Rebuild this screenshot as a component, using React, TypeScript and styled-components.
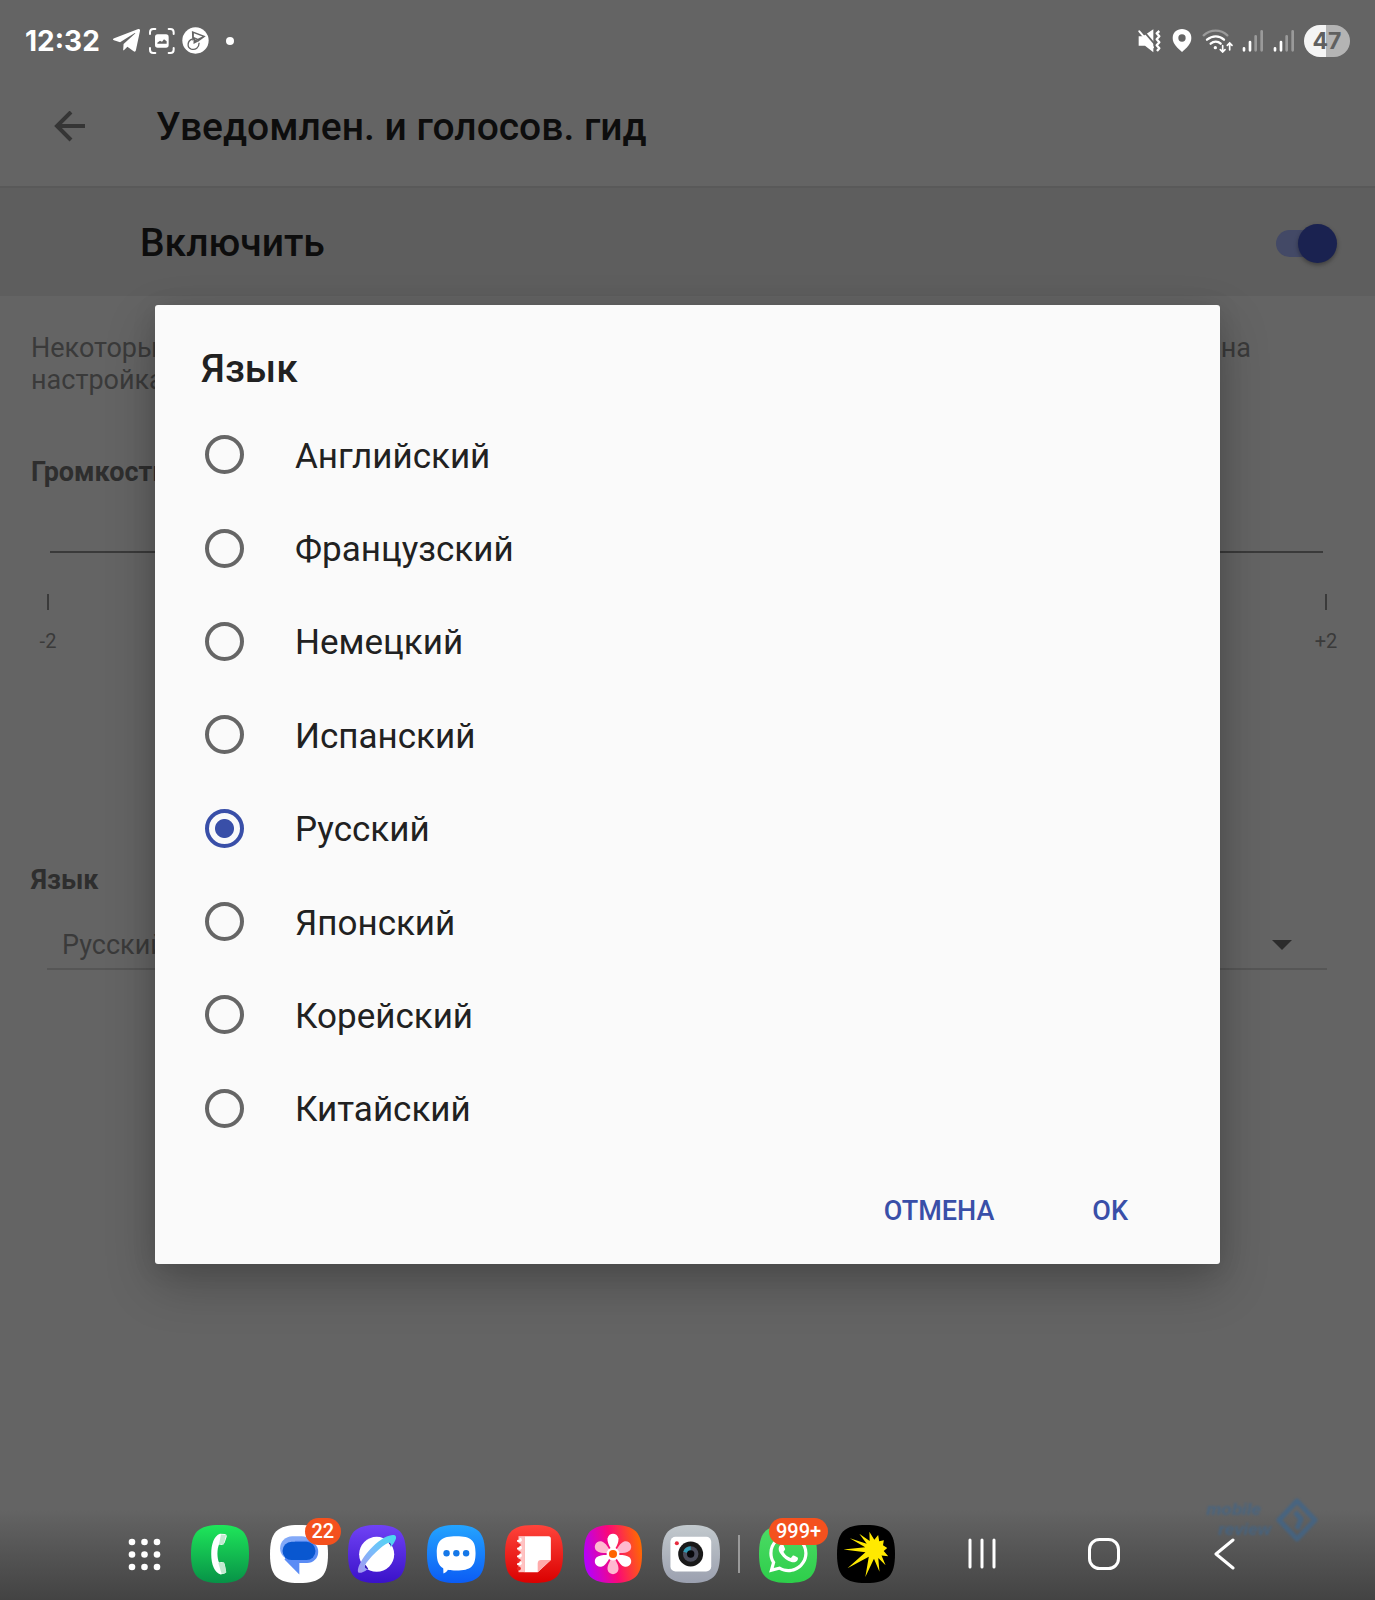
import React, { useState } from "react";
import styled, { createGlobalStyle } from "styled-components";
import { FaTelegramPlane, FaWhatsapp } from "react-icons/fa";

const color = {
  page: "#646464",
  band: "#5e5e5e",
  title: "#0d0d0d",
  label: "#2e2e2e",
  body: "#3a3a3a",
  accent: "#394fa8",
  sheet: "#fafafa",
  badge: "#f4511e",
};

const GlobalStyle = createGlobalStyle`
  * { box-sizing: border-box; }
  body {
    margin: 0;
    background: ${color.page};
    font-family: Roboto, "Noto Sans", sans-serif;
  }
  button, input, select { font-family: inherit; margin: 0; }
`;

const Screen = styled.div`
  position: relative;
  display: flex;
  flex-direction: column;
  min-height: 100vh;
  overflow: hidden;
`;

const StatusBar = styled.div`
  display: flex;
  align-items: center;
  justify-content: space-between;
  height: 72px;
  padding: 9px 25px 0;
  color: #fff;
`;

const StatusGroup = styled.div<{ $gap: number }>`
  display: flex;
  align-items: center;
  gap: ${(p) => p.$gap}px;
`;

const Clock = styled.time`
  margin-right: 4px;
  font: 700 28px/32px Inter, sans-serif;
`;

const Dot = styled.span`
  width: 8px;
  height: 8px;
  margin-left: 10px;
  border-radius: 50%;
  background: #fff;
`;

const Battery = styled.span`
  display: flex;
  align-items: center;
  justify-content: center;
  width: 46px;
  height: 32px;
  border-radius: 16px;
  background: linear-gradient(90deg, #f4f4f4 47%, #b4b4b4 47%);
  color: #606060;
  font: 700 23px/32px Inter, sans-serif;
`;

const AppBar = styled.header`
  display: flex;
  align-items: center;
  gap: 64px;
  height: 116px;
  padding: 0 47px 4px;
  border-bottom: 2px solid #595959;
`;

const IconButton = styled.button`
  display: flex;
  align-items: center;
  justify-content: center;
  width: 45px;
  height: 45px;
  padding: 0;
  border: 0;
  background: none;
`;

const Heading = styled.h1`
  margin: 0;
  color: ${color.title};
  font-size: 39px;
  line-height: 46px;
  font-weight: 500;
`;

const EnableRow = styled.label`
  display: flex;
  align-items: center;
  justify-content: space-between;
  height: 108px;
  padding: 2px 38px 0 140px;
  background: ${color.band};
  color: ${color.title};
  font-size: 39px;
  line-height: 46px;
  font-weight: 500;
`;

const SwitchBox = styled.span`
  display: grid;
  align-items: center;
  width: 61px;
  height: 39px;
  & > * { grid-area: 1 / 1; }
`;

const SwitchTrack = styled.span`
  width: 54px;
  height: 27px;
  border-radius: 14px;
  background: #434966;
`;

const Switch = styled.input`
  appearance: none;
  display: flex;
  justify-content: flex-end;
  width: 61px;
  height: 39px;
  &::after {
    content: "";
    width: 39px;
    height: 39px;
    border-radius: 50%;
    background: #1a2250;
    box-shadow: 0 2px 4px rgba(0, 0, 0, 0.35);
  }
  &:not(:checked) { justify-content: flex-start; }
`;

const Content = styled.main`
  flex: 1;
  padding: 36px 38px 0 31px;
  color: ${color.body};
  font-size: 27px;
  line-height: 32px;
`;

const Hint = styled.p`
  margin: 0 0 60px;
`;

const HintLine = styled.span`
  display: flex;
  justify-content: space-between;
  padding-right: 86px;
`;

const FieldLabel = styled.label`
  display: block;
  color: ${color.label};
  font-weight: 700;
`;

const Volume = styled.input`
  appearance: none;
  display: block;
  width: calc(100% - 33px);
  height: 32px;
  margin: 48px 14px 26px 19px;
  background: linear-gradient(${color.body}, ${color.body}) center / 100% 2px no-repeat;
  &::-webkit-slider-thumb {
    appearance: none;
    width: 32px;
    height: 32px;
    border-radius: 50%;
    background: #1a2250;
  }
`;

const Scale = styled.div`
  display: flex;
  justify-content: space-between;
  margin: 0 -5px 211px 1px;
`;

const Mark = styled.span`
  display: flex;
  flex-direction: column;
  align-items: center;
  gap: 19px;
  min-width: 32px;
  font-size: 20px;
  line-height: 24px;
  &::before {
    content: "";
    width: 2px;
    height: 16px;
    background: ${color.body};
  }
`;

const SelectBox = styled.div`
  display: flex;
  align-items: center;
  height: 49px;
  margin: 25px 10px 0 16px;
  padding-right: 35px;
  border-bottom: 2px solid #565656;
`;

const Select = styled.select`
  flex: 1;
  appearance: none;
  height: 47px;
  padding: 0 0 0 15px;
  border: 0;
  background: none;
  color: ${color.body};
  font-size: 27px;
  line-height: 32px;
`;

const Overlay = styled.div`
  position: absolute;
  inset: 0;
  display: flex;
  align-items: center;
  justify-content: center;
  padding: 0 155px 31px;
`;

const Dialog = styled.form`
  flex: 1;
  padding: 41px 45px 0 46px;
  border-radius: 3px;
  background: ${color.sheet};
  box-shadow: 0 20px 50px rgba(0, 0, 0, 0.24), 0 4px 24px rgba(0, 0, 0, 0.1);
`;

const DialogTitle = styled.h2`
  margin: 0 0 16px;
  color: #212121;
  font-size: 39px;
  line-height: 46px;
  font-weight: 500;
`;

const Options = styled.div`
  display: grid;
  grid-auto-rows: 1fr;
  min-height: 747px;
`;

const Option = styled.label`
  display: flex;
  align-items: center;
  gap: 51px;
  padding-left: 4px;
  color: #212121;
  font-size: 35px;
  line-height: 42px;
`;

const OptionText = styled.span`
  padding-top: 4px;
`;

const Radio = styled.input`
  appearance: none;
  width: 39px;
  height: 39px;
  border: 4px solid #666;
  border-radius: 50%;
  &:checked {
    border-color: ${color.accent};
    background: radial-gradient(circle, ${color.accent} 9px, transparent 10px);
  }
`;

const Actions = styled.div`
  display: flex;
  align-items: center;
  justify-content: flex-end;
  gap: 66px;
  height: 109px;
  padding: 2px 31px 0 0;
`;

const TextButton = styled.button`
  padding: 16px;
  border: 0;
  background: none;
  color: ${color.accent};
  font-size: 27px;
  line-height: 32px;
  font-weight: 500;
`;

const Dock = styled.nav`
  display: flex;
  align-items: center;
  justify-content: center;
  height: 90px;
  padding: 0 6px 2px 0;
  background: linear-gradient(#646464, #434343);
`;

const Launcher = styled(IconButton)`
  width: 33px;
  margin-right: 30px;
`;

const Apps = styled.div`
  display: flex;
  justify-content: space-between;
  flex: 0 1 529px;
`;

const RecentApps = styled.div`
  display: flex;
  gap: 20px;
`;

const AppButton = styled.button`
  position: relative;
  width: 58px;
  height: 58px;
  padding: 0;
  border: 0;
  background: none;
`;

const Badge = styled.span<{ $left: number }>`
  position: absolute;
  top: -7px;
  left: ${(p) => p.$left}px;
  min-width: 32px;
  padding: 0 7px;
  border-radius: 14px;
  background: ${color.badge};
  color: #fff;
  font: 500 20px/27px Roboto, sans-serif;
  text-align: center;
`;

const Divider = styled.span`
  width: 2px;
  height: 38px;
  margin: 0 19px 0 18px;
  background: #9a9a9a;
`;

const SystemKeys = styled.div`
  display: flex;
  justify-content: space-between;
  flex: 0 1 275px;
  margin-left: 71px;
`;

const KeyButton = styled(IconButton)`
  width: 32px;
`;

const Watermark = styled.div`
  position: absolute;
  right: 56px;
  bottom: 57px;
  display: flex;
  align-items: center;
  gap: 4px;
  color: #3f658a;
  filter: blur(1px);
  opacity: 0.75;
`;

const WatermarkText = styled.span`
  display: flex;
  flex-direction: column;
  font: italic 700 17px/20px "Liberation Sans", sans-serif;
  text-align: right;
  & > :first-child { padding-right: 10px; }
`;

const SQUIRCLE = "M86 0C151 0 172 21 172 86S151 172 86 172S0 151 0 86S21 0 86 0Z";

/* App tiles share one rounded shape; each glyph is drawn on its own origin. */
function Tile({ id, stops, x, children, horizontal }: {
  id: string; stops: string[]; x: number; children?: React.ReactNode; horizontal?: boolean;
}) {
  return (
    <svg width="58" height="58" viewBox="0 0 172 172" aria-hidden="true">
      <defs>
        <linearGradient id={id} x1="0" y1={horizontal ? ".6" : "0"} x2={horizontal ? "1" : "0"} y2={horizontal ? ".4" : "1"}>
          {stops.map((s, i) => (
            <stop key={i} offset={i / (stops.length - 1)} stopColor={s} />
          ))}
        </linearGradient>
      </defs>
      <path d={SQUIRCLE} fill={`url(#${id})`} />
      <g transform={`translate(${-x} -108)`}>{children}</g>
    </svg>
  );
}

const burstTips = [
  [341, 181], [360, 147], [388, 134], [418, 128], [444, 138], [461, 153],
  [471, 176], [474, 201], [466, 227], [448, 247], [406, 262], [353, 236],
];

function burstPath() {
  const cx = 433;
  const cy = 180;
  const angles = burstTips.map(([x, y]) => Math.atan2(y - cy, x - cx));
  return burstTips
    .map(([x, y], i) => {
      let next = angles[(i + 1) % angles.length];
      if (next < angles[i]) next += Math.PI * 2;
      const mid = (angles[i] + next) / 2;
      return `${i ? "L" : "M"}${x} ${y}L${cx + 28 * Math.cos(mid)} ${cy + 28 * Math.sin(mid)}`;
    })
    .join("") + "Z";
}

function Signal() {
  return (
    <svg width="22" height="24" viewBox="421 88 66 72" strokeWidth="8" strokeLinecap="round" aria-hidden="true">
      <path d="M427 146V152M445 127V152" stroke="#fff" />
      <path d="M462 110V152M480 95V152" stroke="#9a9a9a" />
    </svg>
  );
}

const languages = [
  "Английский", "Французский", "Немецкий", "Испанский",
  "Русский", "Японский", "Корейский", "Китайский",
];

export default function App() {
  const [language, setLanguage] = useState("Русский");
  const petal = "M577 188C567 172 559 159 561 147C565 130 589 130 593 147C595 159 587 172 577 188Z";

  return (
    <Screen>
      <GlobalStyle />
      <StatusBar>
        <StatusGroup $gap={7}>
          <Clock>12:32</Clock>
          <FaTelegramPlane size={31} />
          <svg width="26" height="26" viewBox="440 86 78 78" fill="none" stroke="#fff" strokeWidth="6" strokeLinecap="round" aria-hidden="true">
            <path d="M443 104V99Q443 89 453 89H459M499 89H504Q514 89 514 99V104M514 146V151Q514 161 504 161H499M459 161H453Q443 161 443 151V146" />
            <rect x="458" y="105" width="41" height="40" rx="8" fill="#fff" stroke="none" />
            <path d="M465 133V130L473 124L479 127L485 120L493 126V133Z" fill="#646464" stroke="none" />
          </svg>
          <svg width="27" height="27" viewBox="542 82 82 82" aria-hidden="true">
            <circle cx="583" cy="123" r="40" fill="#fff" />
            <path d="M572 94L614 110L592 126L582 118L573 124Z" fill="#646464" />
            <path d="M578 101L604 111L590 118L578 112Z" fill="#fff" />
            <path d="M577 116L593 125L577 134Z" fill="#646464" />
            <path d="M573 119C558 124 556 144 570 149C583 153 594 144 594 130" fill="none" stroke="#646464" strokeWidth="4" />
          </svg>
          <Dot />
        </StatusGroup>
        <StatusGroup $gap={9}>
          <svg width="24" height="24" viewBox="117 87 72 72" fill="none" stroke="#fff" aria-hidden="true">
            <path d="M119 109H132L163 88V157L138 137H119Z" fill="#fff" stroke="none" />
            <path d="M130 89L168 133" stroke="#646464" strokeWidth="5" />
            <path d="M121 94L162 142" strokeWidth="6" strokeLinecap="round" />
            <path d="M181 93L173 100L181 109L173 118L181 127L173 136L181 145L174 153" strokeWidth="7" strokeLinejoin="round" />
          </svg>
          <svg width="22" height="25" viewBox="214 85 66 75" aria-hidden="true">
            <path d="M247 88C231 88 219 99 219 115C219 133 234 146 247 157C260 146 275 133 275 115C275 99 263 88 247 88Z" fill="#fff" />
            <circle cx="247" cy="115" r="11" fill="#646464" />
          </svg>
          <svg width="31" height="24" viewBox="308 87 93 72" fill="none" strokeWidth="7" strokeLinecap="round" aria-hidden="true">
            <path d="M313 106C334 87 364 87 384 106" stroke="#9a9a9a" />
            <path d="M323 119C339 106 360 106 374 119M334 131C343 123 356 123 364 131" stroke="#fff" />
            <circle cx="348" cy="143" r="5" fill="#fff" />
            <path d="M370 137V155M363 149L370 156L377 149M391 150V131M384 136L391 129L398 136" stroke="#fff" strokeWidth="5" />
          </svg>
          <Signal />
          <Signal />
          <Battery>47</Battery>
        </StatusGroup>
      </StatusBar>

      <AppBar>
        <IconButton aria-label="Назад">
          <svg width="32" height="32" viewBox="0 0 32 32" fill="none" stroke="#353535" strokeWidth="4" aria-hidden="true">
            <path d="M31 15H3M17 1L3 15L17 29" />
          </svg>
        </IconButton>
        <Heading>Уведомлен. и голосов. гид</Heading>
      </AppBar>

      <EnableRow>
        Включить
        <SwitchBox>
          <SwitchTrack />
          <Switch type="checkbox" role="switch" defaultChecked />
        </SwitchBox>
      </EnableRow>

      <Content>
        <Hint>
          <HintLine><span>Некоторые</span><span>на</span></HintLine>
          настройках
        </Hint>
        <FieldLabel htmlFor="volume">Громкость</FieldLabel>
        <Volume id="volume" type="range" min={-2} max={2} defaultValue={0} />
        <Scale>
          <Mark>-2</Mark>
          <Mark>+2</Mark>
        </Scale>
        <FieldLabel htmlFor="language">Язык</FieldLabel>
        <SelectBox>
          <Select id="language" value={language} onChange={(e) => setLanguage(e.target.value)}>
            {languages.map((l) => <option key={l}>{l}</option>)}
          </Select>
          <svg width="20" height="10" viewBox="0 0 20 10" aria-hidden="true"><path d="M0 0H20L10 10Z" fill="#2c2c2c" /></svg>
        </SelectBox>
      </Content>

      <Overlay>
        <Dialog role="dialog" aria-labelledby="dialog-title" onSubmit={(e) => e.preventDefault()}>
          <DialogTitle id="dialog-title">Язык</DialogTitle>
          <Options role="radiogroup" aria-labelledby="dialog-title">
            {languages.map((l) => (
              <Option key={l}>
                <Radio type="radio" name="voice" checked={l === language} onChange={() => setLanguage(l)} />
                <OptionText>{l}</OptionText>
              </Option>
            ))}
          </Options>
          <Actions>
            <TextButton type="button">ОТМЕНА</TextButton>
            <TextButton type="submit">OK</TextButton>
          </Actions>
        </Dialog>
      </Overlay>

      <Dock>
        <Launcher aria-label="Все приложения">
          <svg width="33" height="33" viewBox="0 0 33 33" fill="#fff" aria-hidden="true">
            {[4, 16.5, 29].map((y) => [4, 16.5, 29].map((x) => <circle key={`${x}-${y}`} cx={x} cy={y} r="3.3" />))}
          </svg>
        </Launcher>
        <Apps>
          <AppButton aria-label="Телефон">
            <Tile id="phone" x={274} stops={["#1fe65a", "#079247"]}>
              <path d="M360 134C342 140 334 165 334 195C334 225 344 250 362 255L374 252Q380 250 378 244L374 224Q372 217 364 218L357 219C351 205 351 180 357 166L365 167Q372 167 374 160L380 142Q381 136 374 135Z" fill="#fff" />
              <path d="M363 136L378 138L371 166L357 165ZM355 221L372 218L379 249L365 253Z" fill="#a9dfbd" opacity=".7" />
            </Tile>
          </AppButton>
          <AppButton aria-label="Сообщения Google">
            <Tile id="chat" x={510} stops={["#fff", "#fff"]}>
              <rect x="540" y="141" width="100" height="72" rx="36" fill="#83a9f8" />
              <path d="M585 155H620A33 33 0 0 1 620 221H597V255L553 210Z" fill="#5b8cf5" />
              <rect x="547" y="158" width="98" height="54" rx="27" fill="#0957d0" />
            </Tile>
            <Badge $left={35}>22</Badge>
          </AppButton>
          <AppButton aria-label="Интернет">
            <Tile id="web" x={746} stops={["#7042f5", "#3a12c9"]}>
              <defs>
                <linearGradient id="ring" x1="1" y1="0" x2="0" y2="1">
                  <stop offset="0" stopColor="#45dcef" /><stop offset=".5" stopColor="#78bdfb" /><stop offset="1" stopColor="#a695f0" />
                </linearGradient>
              </defs>
              <circle cx="831" cy="195" r="52" fill="#fff" />
              <path d="M866 161L880 146L874 172ZM798 226L806 238L789 243Z" fill="#3518b5" />
              <path d="M776 248C770 232 805 175 853 146C880 132 895 136 886 154C882 163 877 169 871 175C875 166 873 161 866 161C845 170 807 208 796 228C794 234 798 236 804 239C790 250 779 252 776 248Z" fill="url(#ring)" />
            </Tile>
          </AppButton>
          <AppButton aria-label="Сообщения">
            <Tile id="sms" x={20} stops={["#24a4ff", "#0b5cf5"]}>
              <path d="M107 141C151 141 164 153 164 191C164 230 151 243 107 243C96 243 90 243 82 241C79 246 75 250 69 252C68 248 69 243 68 236C55 229 49 216 49 191C49 153 63 141 107 141Z" fill="#fff" />
              {[78, 107, 136].map((x) => <circle key={x} cx={x} cy="192" r="9.5" fill="#1678e8" />)}
            </Tile>
          </AppButton>
          <AppButton aria-label="Заметки">
            <Tile id="notes" x={257} stops={["#ff443b", "#da0000"]}>
              <path d="M315 141H386Q393 141 393 149V212L354 248H315Z" fill="#fff" />
              <rect x="297" y="141" width="19" height="107" fill="#ffc3c3" />
              {[160, 183, 206, 229].map((y) => (
                <g key={y}>
                  <circle cx="298" cy={y + 8} r="6" fill="#ec2621" />
                  <path d={`M296 ${y - 5}Q306 ${y - 4} 303 ${y - 10}`} stroke="#fff" strokeWidth="7" strokeLinecap="round" fill="none" />
                </g>
              ))}
              <path d="M354 248V222Q354 212 364 212H393Z" fill="#ffaaaa" />
            </Tile>
          </AppButton>
          <AppButton aria-label="Галерея">
            <Tile id="gallery" x={491} horizontal stops={["#b300ff", "#fb0877", "#ff6a00"]}>
              {[60, 180, 300].map((a) => <path key={a} d={petal} fill="#ffb9d0" transform={`rotate(${a} 577 194)`} />)}
              {[0, 120, 240].map((a) => <path key={a} d={petal} fill="#fff" transform={`rotate(${a} 577 194)`} />)}
              <circle cx="577" cy="194" r="19" fill="#fff" />
              <circle cx="577" cy="194" r="12" fill="#ff6500" />
            </Tile>
          </AppButton>
          <AppButton aria-label="Камера">
            <Tile id="camera" x={728} stops={["#c2c9cd", "#9ba0af"]}>
              <rect x="753" y="143" width="121" height="103" rx="15" fill="#fff" />
              <circle cx="772" cy="162" r="6" fill="#e72b3d" />
              <circle cx="813" cy="194" r="37" fill="#191919" />
              <circle cx="813" cy="194" r="23" fill="#4b4d5c" />
              <path d="M813 194L791 187Q796 172 813 171Z" fill="#329bb5" />
              <circle cx="813" cy="194" r="11" fill="#08080c" />
            </Tile>
          </AppButton>
        </Apps>
        <Divider />
        <RecentApps>
          <AppButton aria-label="WhatsApp">
            <Tile id="wa" x={87} stops={["#4ddb66", "#2dce4a"]}>
              <FaWhatsapp x={109} y={127} size={130} color="#fff" />
            </Tile>
            <Badge $left={10}>999+</Badge>
          </AppButton>
          <AppButton aria-label="Вспышка">
            <Tile id="burst" x={322} stops={["#000", "#000"]}>
              <path d={burstPath()} fill="#ffe900" />
            </Tile>
          </AppButton>
        </RecentApps>
        <SystemKeys>
          <KeyButton aria-label="Недавние">
            <svg width="32" height="32" viewBox="0 0 32 32" stroke="#fff" strokeWidth="3" strokeLinecap="round" aria-hidden="true">
              <path d="M4 2V29M16 2V29M28 2V29" />
            </svg>
          </KeyButton>
          <KeyButton aria-label="Домой">
            <svg width="32" height="32" viewBox="0 0 32 32" fill="none" stroke="#fff" strokeWidth="3" aria-hidden="true">
              <rect x="1.5" y="1.5" width="29" height="29" rx="10" />
            </svg>
          </KeyButton>
          <KeyButton aria-label="Назад">
            <svg width="32" height="32" viewBox="0 0 32 32" fill="none" stroke="#fff" strokeWidth="3" strokeLinecap="round" strokeLinejoin="round" aria-hidden="true">
              <path d="M24 2L7 16L24 30" />
            </svg>
          </KeyButton>
        </SystemKeys>
      </Dock>

      <Watermark>
        <WatermarkText><span>mobile</span><span>review</span></WatermarkText>
        <svg width="44" height="46" viewBox="0 0 44 46" fill="none" stroke="#3f658a" strokeWidth="5" strokeLinejoin="round" aria-hidden="true">
          <path d="M22 4L40 23L22 42L4 23Z" />
          <path d="M20 15L26 22L22 32" />
        </svg>
      </Watermark>
    </Screen>
  );
}
